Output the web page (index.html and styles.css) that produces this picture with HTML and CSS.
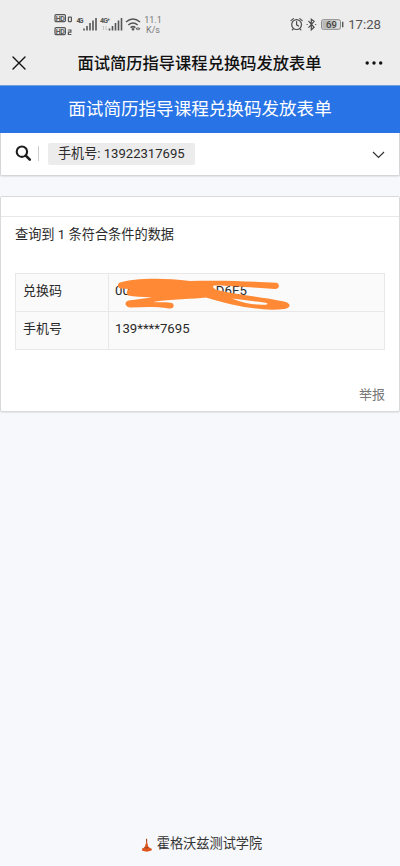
FILE: index.html
```html
<!DOCTYPE html>
<html lang="zh-CN">
<head>
<meta charset="utf-8">
<title>面试简历指导课程兑换码发放表单</title>
<link rel="stylesheet" href="styles.css">
</head>
<body>
<header class="status">
  <svg class="signals" width="90" height="26" viewBox="0 0 90 26">
    <g fill="none" stroke="#555" stroke-width="1.2">
      <rect x="1" y="2.6" width="10.4" height="7" rx="1.2"/>
      <rect x="1" y="15.6" width="10.4" height="7" rx="1.2"/>
      <rect x="14.4" y="5.2" width="3" height="4.4" rx=".5"/>
      <path d="M13.9 18h3v2.2h-2.5v2.3h3"/>
    </g>
    <g class="hd"><text x="1.8" y="8.7" textLength="9">HD</text><text x="1.8" y="21.7" textLength="9">HD</text></g>
    <g class="net"><text x="22.500" y="11.200" textLength="7">4G</text><text x="46" y="11.200" textLength="10">4G⁺</text></g>
    <path d="M30 16.500v2M33 14v4.500M36 11v7.500M39 8.500v10M42 6v12.500" stroke="#555" stroke-width="1.6"/>
    <path d="M55.500 16.500v2M58.500 14v4.500M61.500 11v7.500M64.500 8.500v10M67.500 6v12.500" stroke="#555" stroke-width="1.6"/>
    <path d="M49.500 18v-4l-1 1M52 14v4l1-1" fill="none" stroke="#bbb" stroke-width=".8"/>
    <g fill="none" stroke="#555" stroke-width="1.5">
      <path d="M72 10q7-6 14 0M74.300 13q4.700-4 9.400 0M76.600 15.600q2.400-2 4.800 0"/>
    </g>
    <path d="M77.300 17l1.700-1.200 1.700 1.200-1.700 2zM83.600 15l-2 1.700 2 1.700zM84.400 15l2 1.700-2 1.700z" fill="#555"/>
  </svg>
  <div class="speed"><span>11.1</span><span>K/s</span></div>
  <div class="right">
    <svg width="56" height="16" viewBox="0 0 56 16">
      <g fill="none" stroke="#4c4c4c" stroke-width="1.2" stroke-linecap="round">
        <circle cx="7.6" cy="8.6" r="4.9"/><path d="M7.600 5.600v3.200l2 1.200M2 4.600l2.400-2M13.200 4.600l-2.400-2M4.300 12.800l-1 1.100M10.900 12.800l1 1.100"/>
        <path d="M19.800 5.300l5.300 6-2.800 2.500V3.200l2.800 2.100-5.300 6M18 8.500h.2M26.600 8.500h.2"/>
      </g>
      <rect x="32.500" y="3.700" width="19" height="9.600" rx="1.800" fill="#ddd" stroke="#888"/>
      <path d="M33.500 4.700h12v7.600h-12z" fill="#b9b9b9"/>
      <path d="M53.700 5.700v5.500" stroke="#555" stroke-width="1.400"/>
      <text class="battery" x="37" y="11.900" textLength="11">69</text>
    </svg>
    <span class="time">17:28</span>
  </div>
</header>
<nav class="nav">
  <svg width="14" height="14" viewBox="0 0 14 14"><path d="M1 1l12 12M13 1L1 13" stroke="#111" stroke-width="1.4" stroke-linecap="round"/></svg>
  <h1>面试简历指导课程兑换码发放表单</h1>
  <svg width="18" height="6" viewBox="0 0 18 6" fill="#111"><circle cx="2.2" cy="3" r="1.7"/><circle cx="9" cy="3" r="1.7"/><circle cx="15.7" cy="3" r="1.7"/></svg>
</nav>
<h2 class="banner">面试简历指导课程兑换码发放表单</h2>
<section class="search">
  <svg width="17" height="17" viewBox="0 0 17 17" fill="none" stroke="#1d1d1d"><circle cx="6.900" cy="6.700" r="5.200" stroke-width="2.100"/><path d="M10.800 10.700l4 4" stroke-width="2.600" stroke-linecap="round"/></svg>
  <i class="divider"></i>
  <span class="chip">手机号: 13922317695</span>
  <svg class="chevron" width="13" height="8" viewBox="0 0 13 8"><path d="M1 1l5.500 5.500L12 1" fill="none" stroke="#333" stroke-width="1.200"/></svg>
</section>
<main class="card">
  <div class="card-head"></div>
  <p class="summary">查询到 1 条符合条件的数据</p>
  <div class="table">
    <div class="row"><div class="key">兑换码</div><div class="value code"><span>00</span><span class="tail">D6E5</span>
      <svg class="scribble" width="180" height="36" viewBox="114 276 180 36">
        <path fill="#ff8934" fill-rule="evenodd" d="M120 282.500C132 279 158 277 190 281C223 280 250 281.500 276 282.700C280 283 280 289 275 289C250 287.500 226 285 214 285.500Q211 287 217 290C237 295 264 297 284 301.500C291 303 292 308 284 309C263 311.500 236 306.500 206 297.500C194 299 170 299 153 302C160 302.500 168 301.500 172 303C175 305 174 309 169 308.500C155 306 143 307 130 307.500C124 306.500 124 301 130 300.300Q139 299 152 297.500C142 297 134 296.500 128 295.500Q125 292 129 289L121 288.500C117 288 117 284 120 282.500zM232 298.600C243 303 255 305.500 266 304.700Q270 303.500 264 302.500C253 301 243 300 232 298.600z"/>
      </svg></div></div>
    <div class="row"><div class="key">手机号</div><div class="value">139****7695</div></div>
  </div>
  <a class="report">举报</a>
</main>
<footer class="footer">
  <svg width="12" height="14" viewBox="0 0 12 14"><path d="M5.300.5l.9.600-.2 2.500 1.400 5.500 3.600 1.800-.5 1.600-4.500 1.200-4.800-1L1 10.500l2.500-1L5 5z" fill="#df571c"/><path d="M3.300 9.300q2 1.300 4.300.1M5.400 1l.4 3" fill="none" stroke="#8c3b20" stroke-width=".8"/></svg>
  <span>霍格沃兹测试学院</span>
</footer>
</body>
</html>
```
FILE: styles.css
```css
* { box-sizing: border-box; }
body {
  margin: 0;
  height: 866px;
  display: flex;
  flex-direction: column;
  background: #f7f8fc;
  color: #2a2a2a;
  font: 13px/20px Roboto, "Noto Sans CJK SC", sans-serif;
}
h1, h2, p { margin: 0; }
svg { display: block; flex: none; }
.status {
  height: 44px;
  padding: 12px 19px 0 54px;
  display: flex;
  align-items: flex-start;
  background: #ededed;
}
.hd { font: bold 7px Roboto, sans-serif; fill: #555; }
.net { font: bold 7px Roboto, sans-serif; fill: #555; }
.battery { font: 500 9.5px Roboto, sans-serif; fill: #444; }
.speed {
  width: 18px;
  margin: 3px 0 0;
  display: flex;
  flex-direction: column;
  align-items: center;
  font-size: 9px;
  line-height: 10px;
  color: #777;
}
.right { margin: 4px 0 0 auto; display: flex; gap: 3px; }
.time { font-size: 13.2px; line-height: 18px; color: #555; }
.nav {
  height: 41px;
  padding: 0 17px 3px 12px;
  display: flex;
  align-items: center;
  justify-content: space-between;
  background: #ededed;
}
.nav h1 { font-size: 16.27px; font-weight: 500; line-height: 24px; color: #111; margin: 2px 0 0 8px; white-space: nowrap; }
.banner {
  height: 48px;
  border-top: 1px solid #6f9ddd;
  background: #2873e6;
  color: #fff;
  text-align: center;
  font-size: 17.57px;
  font-weight: 400;
  line-height: 47px;
}
.search {
  height: 43px;
  padding: 0 14px 2px;
  display: flex;
  align-items: center;
  background: #fff;
  border: solid #d4d5d8;
  border-width: 0 1px 1px;
  border-radius: 0 0 2px 2px;
  box-shadow: 0 1px 1px #e3e4e7;
}
.divider { width: 1px; height: 15px; margin: 0 9px 0 6px; background: #ccc; }
.chip {
  width: 147px;
  height: 22px;
  margin-top: 1px;
  padding-left: 10px;
  border-radius: 2px;
  background: #ececed;
  font-size: 13.1px;
  line-height: 21px;
  white-space: nowrap;
}
.chevron { margin: 4px 0 0 auto; }
.card {
  height: 216px;
  margin-top: 20px;
  display: flex;
  flex-direction: column;
  background: #fff;
  border: 1px solid #d8d9dc;
  border-radius: 2px;
  box-shadow: 0 1px 1px #e5e6e9;
}
.card-head { height: 20px; border-bottom: 1px solid #e8e8e8; }
.summary { margin: 8px 14px 0; font-size: 13.2px; }
.table { margin: 28px 14px 0; border: 1px solid #e8e8e8; background: #fafafa; }
.row { height: 37px; display: flex; line-height: 34px; }
.row + .row { height: 38px; border-top: 1px solid #e8e8e8; }
.key { width: 93px; padding-left: 7px; border-right: 1px solid #e8e8e8; }
.value { padding-left: 6px; font-size: 13.2px; }
.code { position: relative; display: flex; }
.tail { margin-left: 86px; }
.scribble { position: absolute; left: 5px; top: 2px; }
.report { margin: 35px 14px 0 auto; color: #777; }
.footer {
  margin-top: auto;
  height: 32px;
  padding-left: 3px;
  display: flex;
  justify-content: center;
  gap: 4px;
  font-size: 13.2px;
  color: #333;
}
.footer svg { margin-top: 4px; }
```
